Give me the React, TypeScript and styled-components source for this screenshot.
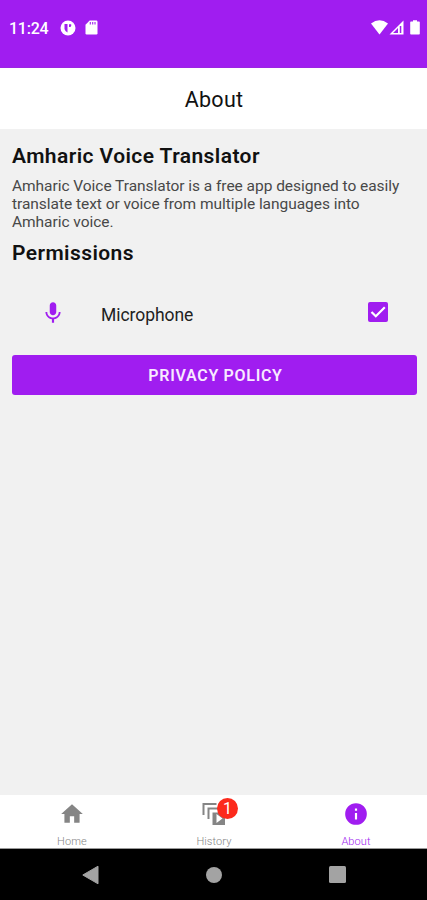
import React from "react";
import styled, { createGlobalStyle } from "styled-components";

const PURPLE = "#a01df0";

const GlobalStyle = createGlobalStyle`
  * { box-sizing: border-box; }
  body { margin: 0; background: #f1f1f1; font-family: Roboto, "Liberation Sans", sans-serif; }
`;

const Screen = styled.div`
  display: flex;
  flex-direction: column;
  width: 427px;
  height: 900px;
  overflow: hidden;
  background: #f1f1f1;
`;

const StatusBar = styled.div`
  display: flex;
  justify-content: space-between;
  height: 68px;
  padding: 17px 6px 0 9px;
  background: ${PURPLE};
  border-bottom: 1px solid #9b25e2;
  color: #fff;
`;

const StatusGroup = styled.div<{ $gap: number }>`
  display: flex;
  align-items: center;
  gap: ${(p) => p.$gap}px;
  height: 21px;
`;

const Clock = styled.span`
  width: 39px;
  margin-right: 3px;
  padding-top: 1px;
  font-size: 16px;
  font-weight: 500;
  letter-spacing: -0.25px;
  white-space: nowrap;
`;

const Header = styled.header`
  display: flex;
  align-items: center;
  justify-content: center;
  height: 61px;
  padding: 2px 0 0 1px;
  background: #fff;
  color: #111;
  font-size: 21.5px;
  letter-spacing: 0.3px;
`;

const Content = styled.main`
  flex: 1;
  padding: 14px 10px 0 12px;
`;

const Heading = styled.h2`
  margin: 0;
  color: #111;
  font-size: 21px;
  font-weight: 600;
  line-height: 26px;
  letter-spacing: 0.42px;
  white-space: nowrap;
`;

const Description = styled.p`
  margin: 8px 0 9px;
  color: #484848;
  font-size: 15.5px;
  line-height: 18px;
  letter-spacing: -0.04px;
  white-space: nowrap;
`;

const PermissionRow = styled.div`
  display: grid;
  grid-template-columns: 89px 1fr 78px;
  align-items: center;
  height: 89px;
  padding-top: 8px;
`;

const IconCell = styled.div`
  display: flex;
  justify-content: center;
  padding: 0 7px 3px 0;
`;

const PermissionName = styled.span`
  color: #222;
  font-size: 17.5px;
  letter-spacing: -0.05px;
`;

const CheckCell = styled.div`
  display: flex;
  justify-content: center;
  padding: 0 0 5px 0;
`;

const PolicyButton = styled.button`
  display: block;
  width: 100%;
  height: 40px;
  padding: 1px 0 0 2px;
  border: 0;
  border-radius: 3px;
  background: ${PURPLE};
  color: #f8e9ff;
  font: 600 16px Roboto, sans-serif;
  letter-spacing: 0.7px;
`;

const TabBar = styled.nav`
  display: grid;
  grid-template-columns: repeat(3, 1fr);
  height: 54px;
  padding-left: 1px;
  background: #fff;
  border-bottom: 1px solid #999;
`;

const Tab = styled.div<{ $active?: boolean }>`
  display: flex;
  flex-direction: column;
  align-items: center;
  padding-top: 6px;
  color: ${(p) => (p.$active ? PURPLE : "#858585")};
`;

const TabIcon = styled.div`
  position: relative;
  display: flex;
  height: 27px;
`;

const TabLabel = styled.span`
  margin-top: 7px;
  font-size: 11px;
  font-weight: 300;
  line-height: 13px;
  letter-spacing: 0.1px;
`;

const Badge = styled.span`
  position: absolute;
  top: -3px;
  left: 15px;
  width: 21px;
  height: 21px;
  border-radius: 50%;
  background: #fc2a1c;
  color: #fff;
  font-size: 16px;
  line-height: 21px;
  text-align: center;
`;

const SystemBar = styled.div`
  display: flex;
  align-items: center;
  justify-content: space-between;
  height: 51px;
  padding: 0 81px 0 82px;
  background: #000;
`;

export default function App() {
  return (
    <>
      <GlobalStyle />
      <Screen>
        <StatusBar>
          <StatusGroup $gap={9}>
            <Clock>11:24</Clock>
            <svg width="16" height="16" viewBox="0 0 16 16">
              <circle cx="8" cy="8" r="7.5" fill="#fff" />
              <path d="M4.500 4h3v8.500A5 5 0 0 1 4.500 9z" fill={PURPLE} />
              <path d="M9 4.200h2.200v1.200a1.700 1.700 0 0 1-2.200 1.500z" fill={PURPLE} />
            </svg>
            <svg width="13" height="15" viewBox="0 0 13 15">
              <path d="M4.700.5h6.600q1.200 0 1.200 1.200v11.600q0 1.200-1.200 1.200H1.700Q.5 14.500.5 13.300V4.700z" fill="#fff" />
              <path d="M5.300 2v2.500M7.700 2v2.500M10 2v2.500" stroke={PURPLE} strokeWidth="1.100" />
            </svg>
          </StatusGroup>
          <StatusGroup $gap={1}>
            <svg width="17" height="15" viewBox="0 0 17 15">
              <path d="M0 3.500Q8.500-3 17 3.500L8.500 14.500z" fill="#fff" />
            </svg>
            <svg width="15" height="15" viewBox="0 0 15 15">
              <path d="M.5 14.500 14.500.5v14z" fill="#fff" />
              <path d="M4 13 9 8V13zM10.800 6h1.500v7h-1.500z" fill={PURPLE} />
            </svg>
            <svg width="16" height="15" viewBox="0 0 16 15">
              <path d="M6 1.500h2V.3h4v1.200h2q.8 0 .8.800v11.500q0 .8-.8.800H6q-.8 0-.8-.8V2.300q0-.8.8-.8z" fill="#fff" />
            </svg>
          </StatusGroup>
        </StatusBar>
        <Header>About</Header>
        <Content>
          <Heading>Amharic Voice Translator</Heading>
          <Description>
            Amharic Voice Translator is a free app designed to easily
            <br />
            translate text or voice from multiple languages into
            <br />
            Amharic voice.
          </Description>
          <Heading>Permissions</Heading>
          <PermissionRow>
            <IconCell>
              <svg width="26" height="26" viewBox="0 0 24 24" fill={PURPLE}>
                <path d="M12 14c1.660 0 2.990-1.340 2.990-3L15 5c0-1.660-1.340-3-3-3S9 3.340 9 5v6c0 1.660 1.340 3 3 3zm5.300-3c0 3-2.540 5.100-5.300 5.100S6.700 14 6.700 11H5c0 3.410 2.720 6.230 6 6.720V21h2v-3.280c3.280-.480 6-3.300 6-6.720h-1.700z" />
              </svg>
            </IconCell>
            <PermissionName>Microphone</PermissionName>
            <CheckCell>
              <svg width="20" height="20" viewBox="0 0 20 20">
                <rect width="20" height="20" rx="2" fill={PURPLE} />
                <path d="m3.500 10 4.300 4.300L16.800 5.300" fill="none" stroke="#fff" strokeWidth="2.200" />
              </svg>
            </CheckCell>
          </PermissionRow>
          <PolicyButton>PRIVACY POLICY</PolicyButton>
        </Content>
        <TabBar>
          <Tab>
            <TabIcon>
              <svg width="26" height="26" viewBox="0 0 24 24" fill="currentColor">
                <path d="M10 20v-6h4v6h5v-8h3L12 3 2 12h3v8z" />
              </svg>
            </TabIcon>
            <TabLabel>Home</TabLabel>
          </Tab>
          <Tab>
            <TabIcon>
              <svg width="24" height="26" viewBox="0 0 24 26" fill="none">
                <path d="M1.500 14V3h13M6.500 18V7.500h12" stroke="currentColor" strokeWidth="2" />
                <path d="M10.500 11.500H23V24H10.500z" fill="currentColor" />
                <path d="m14.500 13 6 4.500-6 4.500z" fill="#fff" />
              </svg>
              <Badge>1</Badge>
            </TabIcon>
            <TabLabel>History</TabLabel>
          </Tab>
          <Tab $active>
            <TabIcon>
              <svg width="26" height="26" viewBox="0 0 24 24" fill="currentColor">
                <path d="M12 2a10 10 0 1 0 0 20 10 10 0 0 0 0-20zm1 15h-2v-6h2v6zm0-8h-2V7h2v2z" />
              </svg>
            </TabIcon>
            <TabLabel>About</TabLabel>
          </Tab>
        </TabBar>
        <SystemBar>
          <svg width="17" height="20" viewBox="0 0 17 20">
            <path d="M.8 10 16 1.200v17.600z" fill="#a3a3a3" stroke="#a3a3a3" strokeLinejoin="round" />
          </svg>
          <svg width="16" height="16" viewBox="0 0 16 16">
            <circle cx="8" cy="8" r="8" fill="#a3a3a3" />
          </svg>
          <svg width="17" height="17" viewBox="0 0 17 17">
            <rect width="17" height="17" rx="1.500" fill="#a3a3a3" />
          </svg>
        </SystemBar>
      </Screen>
    </>
  );
}
